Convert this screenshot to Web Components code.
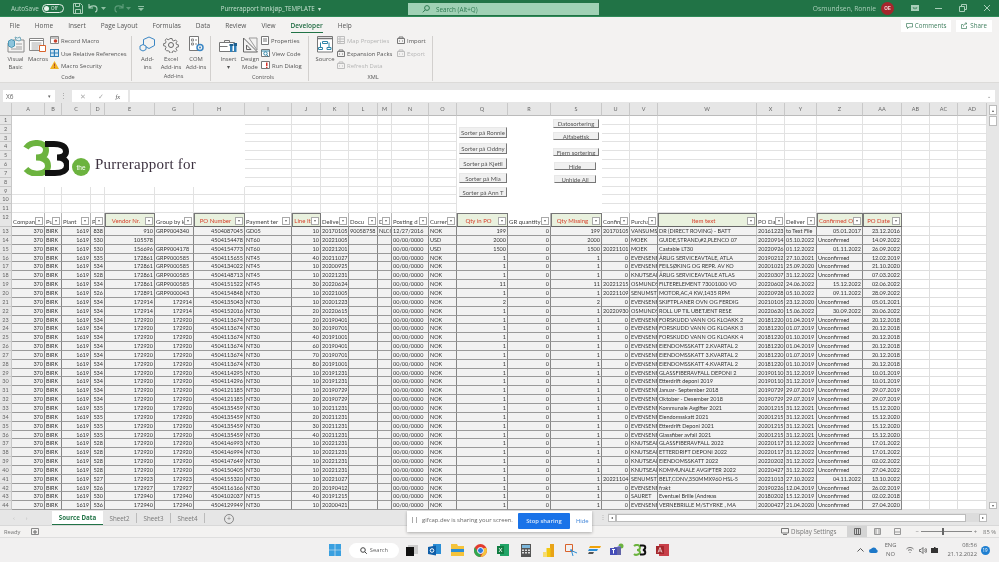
<!DOCTYPE html>
<html>
<head>
<meta charset="utf-8">
<title>Purrerapport</title>
<style>
  html, body { margin: 0; padding: 0; background: #f3f2f1; }
  body { font-family: "Liberation Sans", sans-serif; overflow: hidden; }
</style>
</head>
<body>
<excel-app>
  <title-bar></title-bar>
  <ribbon-bar></ribbon-bar>
  <formula-bar></formula-bar>
  <sheet-view></sheet-view>
  <sheet-tabs></sheet-tabs>
  <status-bar></status-bar>
  <task-bar></task-bar>
  <share-bar></share-bar>
</excel-app>

<script>
// App shell
class ExcelApp extends HTMLElement {
  constructor() {
    super();
    this.attachShadow({ mode: "open" });
    this.shadowRoot.innerHTML = `
      <style>
        :host {
          display: flex;
          flex-direction: column;
          position: relative;
          width: 999px;
          height: 562px;
          overflow: hidden;
          background: #f3f2f1;
          filter: blur(0.45px);
        }
      </style>
      <slot></slot>
    `;
  }
}
customElements.define("excel-app", ExcelApp);

// Title bar
class TitleBar extends HTMLElement {
  constructor() {
    super();
    this.attachShadow({ mode: "open" });
    this.shadowRoot.innerHTML = `
      <style>
        :host {
          display: grid;
          grid-template-columns: 408px 191px 1fr;
          height: 17px;
          background: #217346;
          color: #b9d8c6;
          font: 6.4px "Open Sans", sans-serif;
          border-bottom: 1px solid #2f8a58;
          box-sizing: border-box;
        }
        .left, .right { display: flex; align-items: center; }
        .left { padding-left: 11px; gap: 3px; }
        .toggle {
          width: 19px; height: 7px; border: 1px solid #e8f2ec; border-radius: 5px;
          display: flex; align-items: center; gap: 2px; padding-left: 1px; box-sizing: content-box;
          font-size: 4.6px; color: #e8f2ec;
        }
        .toggle i { width: 5px; height: 5px; border-radius: 50%; background: #e8f2ec; }
        .title { margin-left: auto; padding-right: 87px; font-size: 6.2px; color: #c4e0cf; }
        svg { display: block; }
        .qat { display: flex; align-items: center; gap: 5px; margin-left: 6px; }
        .search {
          display: flex; align-items: center; gap: 6px; padding-left: 14px;
          background: #a0d1b5; margin: 3px 0 1px; color: #2f7a52; font-size: 6.3px;
        }
        .right { justify-content: flex-end; padding-right: 8px; }
        .name { color: #a9cfb9; font-size: 6.7px; margin-right: 5px; }
        .avatar {
          width: 13px; height: 13px; border-radius: 50%; background: #a4262c; color: #f3d9da;
          font: bold 4.6px "Liberation Sans", sans-serif; display: flex; align-items: center; justify-content: center;
          margin-right: 17px;
        }
        .win { display: flex; gap: 16px; align-items: center; }
      </style>
      <div class="left">
        <span>AutoSave</span>
        <span class="toggle"><i></i>Off</span>
        <div class="qat">
          <svg width="10" height="11" viewBox="0 0 10 11" fill="none" stroke="#a9cfb9"><path d="M.5.500h7l2 2v8h-9zM2.500.5v3h4v-3M2.500 10.500v-4h5v4"/></svg>
          <svg width="11" height="10" viewBox="0 0 11 10" fill="none" stroke="#a9cfb9" stroke-width="1.200"><path d="M1 1v4h4M1 5c2-3 8-3 8 1 0 2-1 3-2 3"/></svg>
          <svg width="5" height="3" viewBox="0 0 5 3" fill="#8fc0a4" style="margin-left:-3px"><path d="M0 0h5L2.500 3z"/></svg>
          <svg width="11" height="10" viewBox="0 0 11 10" fill="none" stroke="#5c9c79" stroke-width="1.200" style="margin-left:2px"><path d="M10 1v4H6M10 5C8 2 2 2 2 6c0 2 1 3 2 3"/></svg>
          <svg width="5" height="3" viewBox="0 0 5 3" fill="#5c9c79" style="margin-left:-3px"><path d="M0 0h5L2.500 3z"/></svg>
          <svg width="6" height="5" viewBox="0 0 6 5" fill="#8fc0a4" style="margin-left:2px"><path d="M0 0h6v1H0zM0 2h6L3 5z"/></svg>
        </div>
        <span class="title">Purrerapport Innkjøp_TEMPLATE &nbsp;▾</span>
      </div>
      <div class="search">
        <svg width="8" height="8" viewBox="0 0 8 8" fill="none" stroke="#2f7a52"><circle cx="5" cy="3" r="2.400"/><path d="M3.300 4.800.8 7.300"/></svg>
        <span>Search (Alt+Q)</span>
      </div>
      <div class="right">
        <span class="name">Osmundsen, Ronnie</span>
        <span class="avatar">OE</span>
        <div class="win">
          <svg width="8" height="6" viewBox="0 0 8 6" fill="#a9cfb9"><path d="M0 0h8v6H0z"/><path d="M1.500 2.500h2v2l-1-1zM6.500 2.500h-2v2l1-1z" fill="#217346"/></svg>
          <svg width="8" height="6" viewBox="0 0 8 6" fill="#a9cfb9"><path d="M0 3h7v1H0z"/></svg>
          <svg width="8" height="8" viewBox="0 0 8 8" fill="none" stroke="#a9cfb9"><path d="M.5 2.500h5v5h-5zM2.500 2.500v-2h5v5h-2"/></svg>
          <svg width="8" height="8" viewBox="0 0 8 8" fill="none" stroke="#a9cfb9"><path d="M1 1l6 6M7 1L1 7"/></svg>
        </div>
      </div>
    `;
  }
}
customElements.define("title-bar", TitleBar);

// Ribbon icons
const ribbonIcons = {
  vb: `<svg width="18" height="17" viewBox="0 0 18 17" fill="none"><path d="M6 4h11v12H1V7" stroke="#8a8a8a"/><path d="M9 8h6M9 11h6M4 13h11" stroke="#a0a0a0"/><path d="M1.500 5l3-1.500 3 1.500v5l-3 1.500-3-1.500z" fill="#8cc4dc" stroke="#4a97b5"/><path d="M8 1l2.500 1 2.500-1 1 3-2 1-3-1z" fill="#dfeef4" stroke="#7ab"/></svg>`,
  macros: `<svg width="18" height="16" viewBox="0 0 18 16" fill="none"><path d="M.5 1.500h14v12H.5z" stroke="#888" fill="#fff"/><path d="M.5 3.500h14" stroke="#888"/><path d="M2.500 6h10M2.500 8h10M2.500 10h7M2.500 12h7" stroke="#aaa"/><path d="M10.500 8.500h6v6h-6z" stroke="#d9622b" fill="#fff"/></svg>`,
  record: `<svg width="9" height="8" viewBox="0 0 9 8" fill="none"><path d="M.5.500h8v7h-8z" stroke="#888" fill="#fff"/><path d="M.5 2h8" stroke="#888"/><circle cx="5.500" cy="5" r="1.800" fill="#c8402c"/></svg>`,
  relative: `<svg width="9" height="8" viewBox="0 0 9 8"><path d="M0 0h9v8H0z" fill="#2f7fb8"/><path d="M.8 1h3v2.500h-3zM5 1h3v2.500H5zM.8 4.500h3V7h-3zM5 4.500h3V7H5z" fill="#d5e7f3"/></svg>`,
  security: `<svg width="9" height="8" viewBox="0 0 9 8"><path d="M4.500 0L9 8H0z" fill="#f0b323"/><path d="M4 2.500h1v3H4zM4 6h1v1H4z" fill="#b5472a"/></svg>`,
  addins: `<svg width="17" height="17" viewBox="0 0 17 17" fill="none" stroke="#3a86c4"><path d="M8 1l5.500 2.500v6L8 12.500 2.500 9.500v-6z" transform="translate(2 0)"/><path d="M1 10l3-1.500L7 10v3.500L4 15l-3-1.500z" fill="#f3f2f1"/></svg>`,
  gear: `<svg width="16" height="16" viewBox="0 0 16 16" fill="none" stroke="#666"><circle cx="8" cy="8" r="2.500"/><path d="M6.800 1h2.400l.4 2 1.600.7 1.800-1.100 1.600 1.600-1.100 1.800.7 1.600 2 .4v2.400l-2 .4-.7 1.600 1.100 1.800-1.600 1.600-1.800-1.100-1.600.7-.4 2H6.800l-.4-2-1.600-.7L3 14.500 1.400 12.900l1.100-1.800-.7-1.600-2-.4V6.700l2-.4.7-1.600L1.400 2.900 3 1.300l1.800 1.100 1.600-.7z" transform="translate(.8 .6) scale(.9)"/></svg>`,
  com: `<svg width="15" height="17" viewBox="0 0 15 17" fill="none"><path d="M.5.500h9v14h-9z" stroke="#777" fill="#fff"/><path d="M2.500 3h2v2h-2zM2.500 7h2v2h-2zM6 4h2M6 8h2" stroke="#888"/><circle cx="11" cy="11.500" r="3" stroke="#3a86c4" stroke-width="1.500" fill="#f3f2f1"/><circle cx="11" cy="11.500" r="1" fill="#3a86c4"/></svg>`,
  insert: `<svg width="19" height="15" viewBox="0 0 19 15" fill="none"><path d="M.5 4.500h15v9H.5z" stroke="#777" fill="#fff"/><path d="M5.500 4.500v-2h5v2M.5 8.500h8" stroke="#777"/><path d="M11 7h2.500v7H11zM15 7h2.500v7H15z" fill="#2f7fb8"/><path d="M10.500 6h3.500v2h-3.500zM14.500 5h3.500v3h-3.500z" fill="#1d5f8f"/></svg>`,
  design: `<svg width="15" height="16" viewBox="0 0 15 16" fill="none" stroke="#666"><path d="M.5 1v14h14z"/><path d="M3.500 8v4.500h4.500z"/><path d="M6 1l8 12V1z" stroke="#999"/></svg>`,
  props: `<svg width="8" height="9" viewBox="0 0 8 9" fill="none" stroke="#777"><path d="M.5.500h7v8h-7z" fill="#fff"/><path d="M2 3h4M2 5h4"/></svg>`,
  viewcode: `<svg width="9" height="8" viewBox="0 0 9 8" fill="none"><path d="M.5.500h8v7h-8z" stroke="#777" fill="#fff"/><path d="M.5 2h8" stroke="#2f86a8"/><circle cx="4.500" cy="4.500" r="1.700" stroke="#2f86a8"/><path d="M5.500 5.700L7.500 7.500" stroke="#2f86a8"/></svg>`,
  run: `<svg width="9" height="8" viewBox="0 0 9 8" fill="none"><path d="M.5.500h8v7h-8z" stroke="#777" fill="#fff"/><path d="M5 1.500h1.500v3.500H5zM5 5.800h1.500v1.200H5z" fill="#d9342b"/></svg>`,
  source: `<svg width="16" height="17" viewBox="0 0 16 17" fill="none"><path d="M.5.500h15v15.500H.5z" stroke="#777" fill="#fff"/><path d="M.5 2.500h15" stroke="#777" stroke-width="1.500"/><path d="M5.500 5.500h5v2h-5zM3.500 6.500v5M12 6.500v5M1.500 11.500h4v2h-4zM10 11.500h4v2h-4z" stroke="#2f86a8"/></svg>`,
  grid: `<svg width="8" height="8" viewBox="0 0 8 8" fill="none" stroke="#bdbdbd"><path d="M.5.500h7v7h-7zM.5 3h7M.5 5.500h7M3 .5v7"/></svg>`,
  xml: `<svg width="8" height="8" viewBox="0 0 8 8" fill="none" stroke="#777"><path d="M.5 2.500h7v5h-7zM2 2.500V1h4v1.500M2 5h1M5 5h1"/></svg>`,
  xmlgrey: `<svg width="8" height="8" viewBox="0 0 8 8" fill="none" stroke="#bdbdbd"><path d="M.5 2.500h7v5h-7zM2 2.500V1h4v1.500M2 5h1M5 5h1"/></svg>`,
};

// One big button in a ribbon group
class RibbonButton extends HTMLElement {
  static get observedAttributes() { return ["icon"]; }
  constructor() {
    super();
    this.attachShadow({ mode: "open" });
    this.shadowRoot.innerHTML = `
      <style>
        :host {
          display: flex; flex-direction: column; align-items: center;
          text-align: center; line-height: 8.3px; white-space: pre-line;
        }
        .ico { height: 17px; margin-bottom: 2px; display: flex; align-items: flex-end; justify-content: center; }
      </style>
      <div class="ico" id="ico"></div>
      <div><slot></slot></div>
    `;
  }
  attributeChangedCallback(name, oldValue, newValue) {
    if (name === "icon") this.shadowRoot.getElementById("ico").innerHTML = ribbonIcons[newValue];
  }
}
customElements.define("ribbon-button", RibbonButton);

// One small icon + label row
class RibbonItem extends HTMLElement {
  static get observedAttributes() { return ["icon"]; }
  constructor() {
    super();
    this.attachShadow({ mode: "open" });
    this.shadowRoot.innerHTML = `
      <style>
        :host { display: flex; align-items: center; gap: 2px; height: 12.500px; white-space: nowrap; }
        :host([off]) { color: #b5b5b5; }
      </style>
      <span id="ico"></span>
      <slot></slot>
    `;
  }
  attributeChangedCallback(name, oldValue, newValue) {
    if (name === "icon") this.shadowRoot.getElementById("ico").innerHTML = ribbonIcons[newValue];
  }
}
customElements.define("ribbon-item", RibbonItem);

// A named group in the ribbon
class RibbonGroup extends HTMLElement {
  static get observedAttributes() { return ["label"]; }
  constructor() {
    super();
    this.attachShadow({ mode: "open" });
    this.shadowRoot.innerHTML = `
      <style>
        :host {
          display: grid; grid-template-rows: 1fr 10px;
          border-right: 1px solid #d2d0ce; margin: 2px 0 2px; box-sizing: border-box;
        }
        .body { display: flex; justify-content: flex-start; }
        .label { text-align: center; font-size: 5.600px; color: #555; }
      </style>
      <div class="body"><slot></slot></div>
      <div class="label" id="label"></div>
    `;
  }
  attributeChangedCallback(name, oldValue, newValue) {
    if (name === "label") this.shadowRoot.getElementById("label").textContent = newValue;
  }
}
customElements.define("ribbon-group", RibbonGroup);

class RibbonBar extends HTMLElement {
  constructor() {
    super();
    this.attachShadow({ mode: "open" });
    this.shadowRoot.innerHTML = `
      <style>
        :host {
          display: block; height: 66px; background: #f3f2f1; color: #555;
          font: 5.900px "Open Sans", sans-serif; box-sizing: border-box;
          border-bottom: 1px solid #dcdbd9;
        }
        .tabs { display: flex; align-items: center; height: 17px; padding-left: 9.500px; gap: 15px; font-size: 6.500px; }
        .tabs .on { color: #1f6b42; font-weight: 600; position: relative; }
        .tabs .on::after {
          content: ""; position: absolute; left: 0; right: 0; bottom: -3px; height: 1px; background: #217346;
        }
        .share { margin-left: auto; display: flex; gap: 5px; padding-right: 7px; }
        .share span {
          background: #fff; height: 12px; display: flex; align-items: center; gap: 2px; padding: 0 5px;
          color: #3f7f5e; font-size: 6.200px;
        }
        .groups { display: flex; height: 49px; }
        .stack { display: flex; flex-direction: column; margin-top: -1px; }
      </style>
      <div class="tabs">
        <span>File</span><span>Home</span><span>Insert</span><span>Page Layout</span><span>Formulas</span>
        <span>Data</span><span>Review</span><span>View</span><span class="on">Developer</span><span>Help</span>
        <div class="share">
          <span><svg width="7" height="6" viewBox="0 0 7 6" fill="none" stroke="#3f7f5e" stroke-width=".7"><path d="M.5.500h6v3.500H3L1.500 5.500V4h-1z"/></svg>Comments</span>
          <span><svg width="7" height="7" viewBox="0 0 7 7" fill="none" stroke="#3f7f5e" stroke-width=".7"><path d="M2 2.500H.5v4h5V4M2.500 4.500c0-2 1-3 3-3M4.500.5l1.500 1-1.500 1"/></svg>Share</span>
        </div>
      </div>
      <div class="groups">
        <ribbon-group label="Code" style="width:132px;padding-left:5px">
          <ribbon-button icon="vb" style="width:21px">Visual
Basic</ribbon-button>
          <ribbon-button icon="macros" style="width:24px">Macros</ribbon-button>
          <div class="stack">
            <ribbon-item icon="record">Record Macro</ribbon-item>
            <ribbon-item icon="relative">Use Relative References</ribbon-item>
            <ribbon-item icon="security">Macro Security</ribbon-item>
          </div>
        </ribbon-group>
        <ribbon-group label="Add-ins" style="width:79px;padding-left:5px">
          <ribbon-button icon="addins" style="width:21px">Add-
ins</ribbon-button>
          <ribbon-button icon="gear" style="width:26px">Excel
Add-ins</ribbon-button>
          <ribbon-button icon="com" style="width:24px">COM
Add-ins</ribbon-button>
        </ribbon-group>
        <ribbon-group label="Controls" style="width:98px;padding-left:7px">
          <ribbon-button icon="insert" style="width:21px">Insert
▾</ribbon-button>
          <ribbon-button icon="design" style="width:22px">Design
Mode</ribbon-button>
          <div class="stack" style="margin-left:0">
            <ribbon-item icon="props">Properties</ribbon-item>
            <ribbon-item icon="viewcode">View Code</ribbon-item>
            <ribbon-item icon="run">Run Dialog</ribbon-item>
          </div>
        </ribbon-group>
        <ribbon-group label="XML" style="width:124px;padding-left:5px">
          <ribbon-button icon="source" style="width:22px">Source</ribbon-button>
          <div class="stack" style="margin-left:1px;width:60px">
            <ribbon-item icon="grid" off>Map Properties</ribbon-item>
            <ribbon-item icon="xml">Expansion Packs</ribbon-item>
            <ribbon-item icon="xmlgrey" off>Refresh Data</ribbon-item>
          </div>
          <div class="stack">
            <ribbon-item icon="xml">Import</ribbon-item>
            <ribbon-item icon="xmlgrey" off>Export</ribbon-item>
          </div>
        </ribbon-group>
      </div>
    `;
  }
}
customElements.define("ribbon-bar", RibbonBar);

// Name box and formula input
class FormulaBar extends HTMLElement {
  constructor() {
    super();
    this.attachShadow({ mode: "open" });
    this.shadowRoot.innerHTML = `
      <style>
        :host {
          display: flex; height: 20px; padding: 7px 4px 1px 3px; box-sizing: border-box;
          background: #e6e6e6; align-items: stretch; color: #666;
          font: 6.500px "Open Sans", sans-serif;
        }
        .name {
          width: 52px; background: #fff; display: flex; align-items: center; justify-content: space-between;
          padding: 0 4px 0 3px; box-sizing: border-box;
        }
        .dots { width: 17px; text-align: center; color: #999; line-height: 11px; }
        .fx {
          width: 56px; background: #fff; display: flex; align-items: center; justify-content: space-around;
          padding: 0 2px; box-sizing: border-box; color: #aaa; margin-right: 2px;
        }
        .fx b { color: #555; font: italic 6.500px "Liberation Serif", serif; }
        .input { flex: 1; background: #fff; text-align: right; padding-right: 4px; color: #777; line-height: 12px; font-size: 5px; }
      </style>
      <div class="name"><span>X6</span><span style="font-size:5px">▾</span></div>
      <div class="dots">⋮</div>
      <div class="fx"><span>✕</span><span>✓</span><b>fx</b></div>
      <div class="input">⌄</div>
    `;
  }
}
customElements.define("formula-bar", FormulaBar);

// Floating form button on the sheet
class SheetButton extends HTMLElement {
  constructor() {
    super();
    this.attachShadow({ mode: "open" });
    this.shadowRoot.innerHTML = `
      <style>
        :host {
          position: absolute; display: flex; align-items: center; justify-content: center;
          background: #f0f0f0; color: #555; font: 6px "Lato", sans-serif;
          border-right: 1px solid #777; border-bottom: 1px solid #777;
          border-top: 1px solid #e8e8e8; border-left: 1px solid #e8e8e8;
          box-sizing: border-box; white-space: nowrap;
        }
      </style>
      <slot></slot>
    `;
  }
  connectedCallback() {
    const [x, y, w, h] = this.getAttribute("box").split(",");
    this.style.left = `${x}px`;
    this.style.top = `${y}px`;
    this.style.width = `${w}px`;
    this.style.height = `${h}px`;
  }
}
customElements.define("sheet-button", SheetButton);

// The worksheet
const colEdges = [0, 12, 45, 62, 91, 105, 155, 194, 245, 292, 321, 349, 378, 392, 429, 457, 508, 551, 602, 630, 658, 757, 785, 817, 863, 902, 930, 958, 987];
const colNames = ["", "A", "B", "C", "D", "E", "G", "H", "I", "J", "K", "L", "M", "N", "O", "Q", "R", "S", "U", "V", "W", "X", "Y", "Z", "AA", "AB", "AC", "AD"];
const headText = ["Compan", "Pu", "Plant", "P", "Vendor Nr.", "Group by k", "PO Number", "Payment ter", "Line It", "Delive", "Docu", "D", "Posting d", "Curren", "Qty in PO", "GR quantity", "Qty Missing", "Confin", "Purcha", "Item text", "PO Da", "Deliver", "Confirmed O", "PO Date"];
const redCols = new Set(["E", "H", "J", "Q", "S", "W", "Z", "AA"]);
const noLineCols = new Set(["Q", "R", "S"]);
const logoCols = new Set(["A", "B", "C", "D", "E", "G", "H"]);
// r = right, l = left, per data column
const colAlign = "rlrrrlrlrlllllrrrrllllrr";

const EF = "EVENSENF", KN = "KNUTSEAN", UC = "Unconfirmed";
// D, E, G, H, I, J, K, O, Q, S, U, V, W, X, Y, Z, AA
const rawRows = [
  ["838", "910", "GRP9004340", "4504087045", "GD05", 10, "20170105", "NOK", 199, 199, "20170105", "VANSUMS", "DR (DIRECT ROVING) - BATT", "20161223", "to Text File", "05.01.2017", "23.12.2016"],
  ["530", "105578", "", "4504154478", "NT60", 10, "20221005", "USD", 2000, 2000, "0", "MOEK", "GUIDE,STRAND,#2,PLENCO 07", "20220914", "05.10.2022", UC, "14.09.2022"],
  ["530", "156696", "GRP9004178", "4504154773", "NT60", 10, "20221201", "USD", 1500, 1500, "20221101", "MOEK", "Castable LT30", "20220926", "01.12.2022", "01.11.2022", "26.09.2022"],
  ["535", "172861", "GRP9000585", "4504115655", "NT45", 40, "20211027", "NOK", 1, 1, "0", EF, "ÅRLIG SERVICEAVTALE, ATLA", "20190212", "27.10.2021", UC, "12.02.2019"],
  ["534", "172861", "GRP9000585", "4504134022", "NT45", 10, "20200925", "NOK", 1, 1, "0", EF, "FEILSØKING OG REPR. AV KO", "20201021", "25.09.2020", UC, "21.10.2020"],
  ["528", "172861", "GRP9000585", "4504148713", "NT45", 10, "20221231", "NOK", 1, 1, "0", KN, "ÅRLIG SERVICEAVTALE ATLAS", "20220307", "31.12.2022", UC, "07.03.2022"],
  ["534", "172861", "GRP9000585", "4504151522", "NT45", 30, "20220624", "NOK", 11, 11, "20221215", "OSMUNDS", "FILTERELEMENT 73001000 VO", "20220602", "24.06.2022", "15.12.2022", "02.06.2022"],
  ["526", "172891", "GRP9000043", "4504154848", "NT30", 10, "20221005", "NOK", 1, 1, "20221109", "SENUMST", "MOTOR,AC,4 KW,1435 RPM", "20220928", "05.10.2022", "09.11.2022", "28.09.2022"],
  ["534", "172914", "172914", "4504135043", "NT30", 10, "20201223", "NOK", 2, 2, "0", EF, "SKIFTPLANER OVN OG FERDIG", "20210105", "23.12.2020", UC, "05.01.2021"],
  ["534", "172914", "172914", "4504152016", "NT30", 20, "20220615", "NOK", 1, 1, "20220930", "OSMUNDS", "ROLL UP TIL UBETJENT RESE", "20220620", "15.06.2022", "30.09.2022", "20.06.2022"],
  ["534", "172920", "172920", "4504113674", "NT30", 20, "20190401", "NOK", 1, 1, "0", EF, "FORSKUDD VANN OG KLOAKK 2", "20181220", "01.04.2019", UC, "20.12.2018"],
  ["534", "172920", "172920", "4504113674", "NT30", 30, "20190701", "NOK", 1, 1, "0", EF, "FORSKUDD VANN OG KLOAKK 3", "20181220", "01.07.2019", UC, "20.12.2018"],
  ["534", "172920", "172920", "4504113674", "NT30", 40, "20191001", "NOK", 1, 1, "0", EF, "FORSKUDD VANN OG KLOAKK 4", "20181220", "01.10.2019", UC, "20.12.2018"],
  ["534", "172920", "172920", "4504113674", "NT30", 60, "20190401", "NOK", 1, 1, "0", EF, "EIENDOMSSKATT 2.KVARTAL 2", "20181220", "01.04.2019", UC, "20.12.2018"],
  ["534", "172920", "172920", "4504113674", "NT30", 70, "20190701", "NOK", 1, 1, "0", EF, "EIENDOMSSKATT 3.KVARTAL 2", "20181220", "01.07.2019", UC, "20.12.2018"],
  ["534", "172920", "172920", "4504113674", "NT30", 80, "20191001", "NOK", 1, 1, "0", EF, "EIENDOMSSKATT 4.KVARTAL 2", "20181220", "01.10.2019", UC, "20.12.2018"],
  ["534", "172920", "172920", "4504114295", "NT30", 10, "20191231", "NOK", 1, 1, "0", EF, "GLASSFIBERAVFALL DEPONI 2", "20190110", "31.12.2019", UC, "10.01.2019"],
  ["534", "172920", "172920", "4504114296", "NT30", 10, "20191231", "NOK", 1, 1, "0", EF, "Etterdrift deponi 2019", "20190110", "31.12.2019", UC, "10.01.2019"],
  ["534", "172920", "172920", "4504121185", "NT30", 10, "20190729", "NOK", 1, 1, "0", EF, "Januar- September 2018", "20190729", "29.07.2019", UC, "29.07.2019"],
  ["534", "172920", "172920", "4504121185", "NT30", 20, "20190729", "NOK", 1, 1, "0", EF, "Oktober - Desember 2018", "20190729", "29.07.2019", UC, "29.07.2019"],
  ["535", "172920", "172920", "4504135459", "NT30", 10, "20211231", "NOK", 1, 1, "0", EF, "Kommunale Avgifter 2021", "20201215", "31.12.2021", UC, "15.12.2020"],
  ["535", "172920", "172920", "4504135459", "NT30", 20, "20211231", "NOK", 1, 1, "0", EF, "Eiendomsskatt 2021", "20201215", "31.12.2021", UC, "15.12.2020"],
  ["535", "172920", "172920", "4504135459", "NT30", 30, "20211231", "NOK", 1, 1, "0", EF, "Etterdrift Deponi 2021", "20201215", "31.12.2021", UC, "15.12.2020"],
  ["535", "172920", "172920", "4504135459", "NT30", 40, "20211231", "NOK", 1, 1, "0", EF, "Glassfiber avfall 2021", "20201215", "31.12.2021", UC, "15.12.2020"],
  ["528", "172920", "172920", "4504146993", "NT30", 10, "20221231", "NOK", 1, 1, "0", KN, "GLASSFIBERAVFALL 2022", "20220117", "31.12.2022", UC, "17.01.2022"],
  ["528", "172920", "172920", "4504146994", "NT30", 10, "20221231", "NOK", 1, 1, "0", KN, "ETTERDRIFT DEPONI 2022", "20220117", "31.12.2022", UC, "17.01.2022"],
  ["528", "172920", "172920", "4504147649", "NT30", 10, "20221231", "NOK", 1, 1, "0", KN, "EIENDOMSSKATT 2022", "20220202", "31.12.2022", UC, "02.02.2022"],
  ["528", "172920", "172920", "4504150405", "NT30", 10, "20221231", "NOK", 1, 1, "0", KN, "KOMMUNALE AVGIFTER 2022", "20220427", "31.12.2022", UC, "27.04.2022"],
  ["527", "172923", "172923", "4504155320", "NT30", 10, "20221027", "NOK", 1, 1, "20221104", "SENUMST", "BELT,CONV,350MMX960 HSL-5", "20221013", "27.10.2022", "04.11.2022", "13.10.2022"],
  ["526", "172927", "172927", "4504116166", "NT30", 20, "20190412", "NOK", 1, 1, "0", EF, "frakt", "20190226", "12.04.2019", UC, "26.02.2019"],
  ["530", "172940", "172940", "4504102037", "NT15", 40, "20191215", "NOK", 1, 1, "0", "SAURET", "Eventuel Brille (Andreas", "20180202", "15.12.2019", UC, "02.02.2018"],
  ["536", "172940", "172940", "4504129949", "NT30", 10, "20200421", "NOK", 1, 1, "0", EF, "VERNEBRILLE M/STYRKE , MA", "20200427", "21.04.2020", UC, "27.04.2020"],
];

class SheetView extends HTMLElement {
  constructor() {
    super();
    this.attachShadow({ mode: "open" });
    this.shadowRoot.innerHTML = `
      <style>
        :host {
          display: flex; height: 408px; position: relative; background: #e6e6e6;
          font: 5.500px "Lato", sans-serif; color: #333;
        }
        .grid {
          display: grid; width: 987px; height: 100%; position: relative; align-content: start;
          grid-template-rows: 13px repeat(11, 8.840px) 14px repeat(32, 8.850px);
        }
        .c {
          overflow: hidden; white-space: nowrap; box-sizing: border-box; padding: 0 1px;
          line-height: 8px; min-width: 0;
        }
        .colh, .rowh { background: #e6e6e6; color: #666; text-align: center; border-right: 1px solid #c8c8c8; }
        .colh { line-height: 12px; border-bottom: 1px solid #bbb; }
        .rowh { border-bottom: 1px solid #c8c8c8; }
        .blank { background: #fff; border-right: 1px solid #e2e2e2; border-bottom: 1px solid #e2e2e2; }
        .clean { border-color: #fff; }
        .head {
          background: #fff; border-right: 1px solid #b5b5b5; border-bottom: 1px solid #777;
          display: flex; align-items: flex-end; padding: 0 1px 1px; gap: 0; color: #444; font-size: 6px; line-height: 7px;
        }
        .head span { flex: 1; overflow: hidden; min-width: 0; }
        .head i {
          flex: none; width: 8px; height: 8px; background: #fff; border: 1px solid #aaa; box-sizing: border-box;
          display: flex; align-items: center; justify-content: center;
        }
        .head i::after {
          content: ""; border-left: 1.500px solid transparent; border-right: 1.500px solid transparent; border-top: 2px solid #666;
        }
        .head.red {
          background: #e9f1de; color: #d8402c; border: 1px solid #777; border-bottom: 1px solid #666;
        }
        .head.red span { align-self: flex-start; text-align: center; padding-top: 3px; }
        .d { background: #f2f2f2; border-right: 1px solid #878787; border-bottom: 1px solid #9a9a9a; text-align: left; }
        .d.r { text-align: right; }
        .d.soft { border-right-color: #c4c4c4; }
        .w { background: #fff; border-right: 1px solid #dedede; border-bottom: 1px solid #dedede; }
        .logo {
          position: absolute; left: 23px; top: 37px; display: flex; align-items: flex-end;
        }
        .logo .the {
          width: 18px; height: 18px; border-radius: 50%; background: #6cb33f; color: #fff; font: 6.500px "Liberation Sans", sans-serif;
          display: flex; align-items: center; justify-content: center; margin: 0 5px 0 3px;
        }
        .logo .txt { font: 15px "Liberation Serif", serif; color: #3d3240; letter-spacing: .25px; line-height: 18px; padding-bottom: 3px; }
        .vscroll {
          width: 12px; background: #e6e6e6; display: flex; flex-direction: column; align-items: center; padding-top: 2px; gap: 1px; box-sizing: border-box;
        }
        .vscroll b {
          display: flex; align-items: center; justify-content: center; width: 8px; height: 10px; background: #fff; border: 1px solid #bbb; box-sizing: border-box;
          font: 4px "DejaVu Sans", sans-serif; color: #555;
        }
        .vscroll .thumb { height: 10px; }
        .vscroll .down { margin-top: auto; margin-bottom: 2px; height: 7px; }
      </style>
      <div class="grid" id="grid"></div>
      <div class="vscroll"><b>▴</b><b class="thumb"></b><b class="down">▾</b></div>
      <slot></slot>
    `;
    this.buildGrid();
    this.buildOverlays();
  }

  buildGrid() {
    const grid = this.shadowRoot.getElementById("grid");
    const widths = [];
    for (let i = 1; i < colEdges.length; i++) widths.push(`${colEdges[i] - colEdges[i - 1]}px`);
    grid.style.gridTemplateColumns = widths.join(" ");

    const add = (cls, text) => {
      const cell = document.createElement("div");
      cell.className = `c ${cls}`;
      if (text !== undefined) cell.textContent = text;
      grid.appendChild(cell);
      return cell;
    };

    colNames.forEach((name) => add("colh", name));

    for (let row = 1; row <= 11; row++) {
      add("rowh", row);
      colNames.slice(1).forEach((name) => {
        const noLine = noLineCols.has(name) || (logoCols.has(name) && row <= 8);
        add(noLine ? "blank clean" : "blank");
      });
    }

    add("rowh", 12);
    headText.forEach((text, i) => {
      const name = colNames[i + 1];
      const cell = add(redCols.has(name) ? "head red" : "head");
      const label = document.createElement("span");
      label.textContent = text;
      cell.appendChild(label);
      cell.appendChild(document.createElement("i"));
    });
    add("w"); add("w"); add("w");

    rawRows.forEach((r, i) => {
      add("rowh", 13 + i);
      const first = i === 0;
      const values = [370, "BIRK", 1619, r[0], r[1], r[2], r[3], r[4], r[5], r[6],
        first ? "90058758" : "", first ? "NLCC" : "", first ? "12/27/2016" : "00/00/0000",
        r[7], r[8], 0, r[9], r[10], r[11], r[12], r[13], r[14], r[15], r[16]];
      values.forEach((value, c) => {
        let align = colAlign[c] === "r";
        if (c === 5 && /^\d+$/.test(value)) align = true;
        if (c === 22 && value === UC) align = false;
        add(`d ${align ? "r" : ""} ${c === 19 ? "soft" : ""}`, value);
      });
      add("w"); add("w"); add("w");
    });
  }

  buildOverlays() {
    const grid = this.shadowRoot.getElementById("grid");
    const logo = document.createElement("div");
    logo.className = "logo";
    logo.innerHTML = `
      <svg width="46" height="36" viewBox="0 0 46 36" fill="none" stroke-width="6">
        <path d="M3 8C7 1 23 1 23 10c0 6-5 7.500-10 7.500 7 0 12 2 12 8.500 0 9-16 10-22 3" stroke="#6cb33f"/>
        <path d="M22 4h9c8 0 12 3 12 7.500 0 4-4 6-9 6 6 0 10 3 10 8 0 5-5 7.500-12 7.500h-10" stroke="#111"/>
      </svg>
      <div class="the">the</div>
      <div class="txt">Purrerapport for</div>
    `;
    grid.appendChild(logo);

    const buttons = [
      ["459,24,48,11", "Sorter på Ronnie"], ["459,40,48,11", "Sorter på Oddny"], ["459,55,48,11", "Sorter på Kjetil"],
      ["459,70,48,10", "Sorter på Mia"], ["459,84,48,10", "Sorter på Ann T"],
      ["553,16,46,9", "Datosortering"], ["553,29,46,8", "Alfabetisk"], ["553,45,46,8", "Fjern sortering"],
      ["554,59,42,8", "Hide"], ["554,72,42,8", "Unhide All"],
    ];
    buttons.forEach(([box, text]) => {
      const btn = document.createElement("sheet-button");
      btn.setAttribute("box", box);
      btn.textContent = text;
      grid.appendChild(btn);
    });
  }
}
customElements.define("sheet-view", SheetView);

// Sheet tabs + horizontal scrollbar
class SheetTabs extends HTMLElement {
  constructor() {
    super();
    this.attachShadow({ mode: "open" });
    this.shadowRoot.innerHTML = `
      <style>
        :host {
          display: flex; height: 15px; background: #e6e6e6; color: #777; align-items: stretch;
          font: 6.200px "Open Sans", sans-serif; border-bottom: 1px solid #d8d8d8; box-sizing: border-box;
        }
        .nav { width: 52px; display: flex; gap: 11px; padding-left: 13px; align-items: center; color: #bbb; font-size: 6px; box-sizing: border-box; }
        .tab { display: flex; align-items: center; justify-content: center; width: 33px; border-right: 1px solid #bbb; margin: 2px 0; }
        .tab.on {
          width: 51px; margin: 0; background: #fff; color: #217346; font-weight: 700; border-bottom: 1px solid #217346; border-right: 0;
        }
        .add {
          margin: 3px 0 0 19px; width: 8px; height: 8px; border: 1px solid #888; border-radius: 50%;
          display: flex; align-items: center; justify-content: center; font-size: 7px; line-height: 8px;
        }
        .dots { margin-left: auto; width: 8px; color: #aaa; line-height: 12px; }
        .hscroll { width: 379px; display: flex; align-items: center; margin-right: 12px; background: #dcdcdc; margin-top: 2px; margin-bottom: 3px; }
        .hscroll b {
          height: 8px; background: #fff; border: 1px solid #bbb; box-sizing: border-box; display: flex; align-items: center; justify-content: center;
          font: 4px "DejaVu Sans", sans-serif; color: #555;
        }
        .hscroll .arrow { width: 8px; }
        .hscroll .thumb { width: 350px; }
      </style>
      <div class="nav"><span>‹</span><span>›</span></div>
      <div class="tab on">Source Data</div>
      <div class="tab">Sheet2</div>
      <div class="tab">Sheet3</div>
      <div class="tab">Sheet4</div>
      <div class="add">+</div>
      <div class="dots">⋮</div>
      <div class="hscroll">
        <b class="arrow">◂</b><b class="thumb"></b><span style="flex:1"></span><b class="arrow">▸</b>
      </div>
    `;
  }
}
customElements.define("sheet-tabs", SheetTabs);

// Status bar
class StatusBar extends HTMLElement {
  constructor() {
    super();
    this.attachShadow({ mode: "open" });
    this.shadowRoot.innerHTML = `
      <style>
        :host {
          display: flex; align-items: center; height: 12px; background: #f3f2f1; color: #777;
          font: 5.800px "Open Sans", sans-serif; padding-left: 4px; box-sizing: border-box; border-bottom: 1px solid #dedede;
        }
        .macro { margin-left: 10px; }
        .right { margin-left: auto; display: flex; align-items: center; height: 100%; }
        .ds { display: flex; align-items: center; gap: 2px; margin-right: 11px; font-size: 6.200px; }
        .view { width: 20px; height: 100%; display: flex; align-items: center; justify-content: center; }
        .view.on { background: #d4d4d4; }
        .zoom { display: flex; align-items: center; gap: 2px; margin-left: 8px; padding-right: 3px; }
        .track { width: 51px; height: 1px; background: #888; position: relative; }
        .track i { position: absolute; left: 21px; top: -3px; width: 2px; height: 7px; background: #666; }
      </style>
      <span>Ready</span>
      <svg class="macro" width="8" height="7" viewBox="0 0 8 7" fill="none" stroke="#888"><path d="M.5.500h7v6h-7z"/><circle cx="4" cy="4" r="1.300" fill="#999"/></svg>
      <div class="right">
        <div class="ds">
          <svg width="8" height="7" viewBox="0 0 8 7" fill="none" stroke="#777"><path d="M.5.500h7v4.500h-7zM2 6.500h4"/></svg>
          <span>Display Settings</span>
        </div>
        <div class="view on"><svg width="7" height="7" viewBox="0 0 7 7" fill="none" stroke="#666"><path d="M.5.500h6v6h-6zM2.500.5v6M4.500.5v6"/></svg></div>
        <div class="view"><svg width="7" height="7" viewBox="0 0 7 7" fill="none" stroke="#999"><path d="M.5.500h6v6h-6zM2 .5v6M5 .5v6"/></svg></div>
        <div class="view"><svg width="7" height="7" viewBox="0 0 7 7" fill="none" stroke="#999"><path d="M.5.500h6v6h-6zM.5 4h6"/></svg></div>
        <div class="zoom">
          <span>−</span><div class="track"><i></i></div><span>+</span>
          <span style="margin-left:4px">85 %</span>
        </div>
      </div>
    `;
  }
}
customElements.define("status-bar", StatusBar);

// Windows taskbar
class TaskBar extends HTMLElement {
  constructor() {
    super();
    this.attachShadow({ mode: "open" });
    this.shadowRoot.innerHTML = `
      <style>
        :host {
          display: flex; align-items: center; flex: 1; background: #f1f0f0; color: #666; position: relative;
          font: 5.800px "Open Sans", sans-serif; padding-left: 329px; box-sizing: border-box;
        }
        .search {
          width: 50px; height: 15px; border-radius: 8px; background: #fff; display: flex; align-items: center; justify-content: center; gap: 3px;
          margin-left: 8px; box-sizing: border-box;
        }
        .apps { display: grid; grid-auto-flow: column; grid-auto-columns: 22.800px; justify-items: center; align-items: center; margin-left: 1.500px; }
        .tray { margin-left: auto; display: flex; align-items: center; padding-right: 9.500px; }
        .lang, .clock { text-align: center; line-height: 9px; font-size: 5.800px; }
        .clock { text-align: right; margin-left: 8px; }
        .note {
          width: 9px; height: 9px; border-radius: 50%; background: #1f7fd1; color: #fff; font-size: 4.500px; display: flex; align-items: center; justify-content: center;
          margin-left: 3.500px;
        }
        svg { display: block; }
      </style>
      <svg width="12" height="12" viewBox="0 0 12 12"><path d="M0 0h5.700v5.700H0zM6.300 0H12v5.700H6.300zM0 6.300h5.700V12H0zM6.300 6.300H12V12H6.300z" fill="#3aa0e0"/></svg>
      <div class="search">
        <svg width="7" height="7" viewBox="0 0 7 7" fill="none" stroke="#444"><circle cx="3" cy="3" r="2.300"/><path d="M4.700 4.700L6.800 6.800"/></svg>
        <span>Search</span>
      </div>
      <div class="apps">
        <svg width="12" height="11" viewBox="0 0 12 11"><path d="M2 0h10v9H2z" fill="#ccc"/><path d="M0 2h8v9H0z" fill="#111"/></svg>
        <svg width="13" height="13" viewBox="0 0 13 13"><path d="M5 0h8v10H5z" fill="#2b8ed6"/><path d="M0 3l8-1.500v10L0 10z" fill="#0f5ea8"/><circle cx="4" cy="6.500" r="1.800" fill="none" stroke="#fff"/></svg>
        <svg width="13" height="12" viewBox="0 0 13 12"><path d="M0 0h6l1 2h6v10H0z" fill="#f5c33b"/><path d="M0 5h13v3H0z" fill="#2b8ed6"/></svg>
        <svg width="13" height="13" viewBox="0 0 13 13"><circle cx="6.500" cy="6.500" r="6.500" fill="#e33b2e"/><path d="M6.500 13A6.500 6.500 0 0 1 .9 3.200l3 5.300 2.500 1.500z" fill="#2fa84f"/><path d="M13 6.500A6.500 6.500 0 0 1 6.500 13l3-5.200V4h3z" fill="#f5c33b"/><circle cx="6.500" cy="6.500" r="3" fill="#2b7de0" stroke="#fff"/></svg>
        <svg width="12" height="12" viewBox="0 0 12 12"><path d="M3 0h9v12H3z" fill="#21a366"/><path d="M0 2h7v8H0z" fill="#107c41"/><path d="M2 4l3 4M5 4L2 8" stroke="#fff" stroke-width=".8"/></svg>
        <svg width="10" height="13" viewBox="0 0 10 13"><path d="M0 0h10v13H0z" fill="#555"/><path d="M1 1h8v3H1z" fill="#7cb7dc"/><path d="M1 5.500h2v1.500H1zM4 5.500h2v1.500H4zM7 5.500h2v1.500H7zM1 8h2v1.500H1zM4 8h2v1.500H4zM7 8h2v1.500H7z" fill="#ddd"/></svg>
        <svg width="11" height="13" viewBox="0 0 11 13"><path d="M7 0h4v13H7z" fill="#e8a317"/><path d="M3.500 4h4v9h-4z" fill="#f2c811"/><path d="M0 8h4v5H0z" fill="#f7dc6f"/></svg>
        <svg width="13" height="13" viewBox="0 0 13 13" fill="none"><path d="M.5.500h7v7h-7z" stroke="#d9622b"/><path d="M5 6l7 3M8 12l-2-7" stroke="#2b8ed6"/></svg>
        <svg width="13" height="8" viewBox="0 0 13 8"><path d="M2 0h11l-1 2H1z" fill="#f0a30a"/><path d="M1 3h9L9 5H0z" fill="#2b8ed6"/><path d="M1 6h5L5 8H0z" fill="#555"/></svg>
        <svg width="14" height="14" viewBox="0 0 14 14"><circle cx="11" cy="3" r="2.500" fill="#6cb33f"/><circle cx="9" cy="5" r="2" fill="#7b83eb"/><path d="M4 4h7v8H4z" fill="#6264a7"/><path d="M0 5h7v7H0z" fill="#464eb8"/><path d="M2 6.500h3M3.500 6.500v4" stroke="#fff"/></svg>
        <svg width="14" height="12" viewBox="0 0 14 12" fill="none" stroke-width="2"><path d="M1 2c2-2 6-1 6 1.500S5 6 4 6c2 0 3 1 3 2.500S3 12 1 10" stroke="#6cb33f"/><path d="M7 1.500h3c3 0 3 4 0 4.500 3 .5 3 4.500 0 4.500H7" stroke="#111"/></svg>
        <svg width="13" height="12" viewBox="0 0 13 12"><path d="M3 0h10v12H3z" fill="#c8404a"/><path d="M0 2h8v8H0z" fill="#a4262c"/><path d="M2 8.500l2-5 2 5M2.800 7h2.400" stroke="#fff" stroke-width=".7" fill="none"/></svg>
      </div>
      <div class="tray">
        <svg width="7" height="4" viewBox="0 0 7 4" fill="none" stroke="#555"><path d="M.5 3.500l3-3 3 3"/></svg>
        <svg style="margin-left:5px" width="9" height="6" viewBox="0 0 9 6"><path d="M2 6a2 2 0 0 1 0-4 3 3 0 0 1 5.500.5A1.800 1.800 0 0 1 7 6z" fill="#1d78c8"/></svg>
        <div class="lang" style="margin-left:6.500px">ENG<br>NO</div>
        <svg style="margin-left:10px" width="8" height="6" viewBox="0 0 8 6" fill="none" stroke="#555" stroke-width=".8"><path d="M.5 2c2-2 5-2 7 0M2 3.500c1-1 3-1 4 0M3.500 5l.5.5.5-.5"/></svg>
        <svg style="margin-left:5px" width="8" height="7" viewBox="0 0 8 7" fill="none" stroke="#555" stroke-width=".8"><path d="M.5 2.500h1.500l2-2v6l-2-2H.5zM5.500 2c1 1 1 2 0 3M6.500 1c1.500 1.500 1.500 3.500 0 5"/></svg>
        <svg style="margin-left:4px" width="8" height="6" viewBox="0 0 8 6"><path d="M0 1h7v5H0zM3 0h1.500v1H3z" fill="#333"/></svg>
        <div class="clock">08:56<br>21.12.2022</div>
        <div class="note">19</div>
      </div>
    `;
  }
}
customElements.define("task-bar", TaskBar);

// Browser "sharing your screen" bar, floats over the sheet tabs
class ShareBar extends HTMLElement {
  constructor() {
    super();
    this.attachShadow({ mode: "open" });
    this.shadowRoot.innerHTML = `
      <style>
        :host {
          position: absolute; left: 407px; top: 511px; width: 185px; height: 21px;
          background: #fff; box-shadow: 0 1px 3px rgba(0,0,0,.3);
          display: flex; align-items: center; padding: 0 0 4px 5px; box-sizing: border-box;
          font: 5.900px "Open Sans", sans-serif; color: #666;
        }
        .grip { width: 3px; height: 6px; border-left: 1px solid #aaa; border-right: 1px solid #aaa; margin-right: 5px; }
        .stop {
          background: #1a73e8; color: #dbe9fb; font-weight: 600; width: 52px; height: 16px; margin: 3px 0 0 5px;
          display: flex; align-items: center; justify-content: center; border-radius: 1px;
        }
        .hide { color: #3b82d8; margin: 3px 0 0 6px; }
      </style>
      <span class="grip"></span>
      <span>gifcap.dev is sharing your screen.</span>
      <span class="stop">Stop sharing</span>
      <span class="hide">Hide</span>
    `;
  }
}
customElements.define("share-bar", ShareBar);
</script>
</body>
</html>
